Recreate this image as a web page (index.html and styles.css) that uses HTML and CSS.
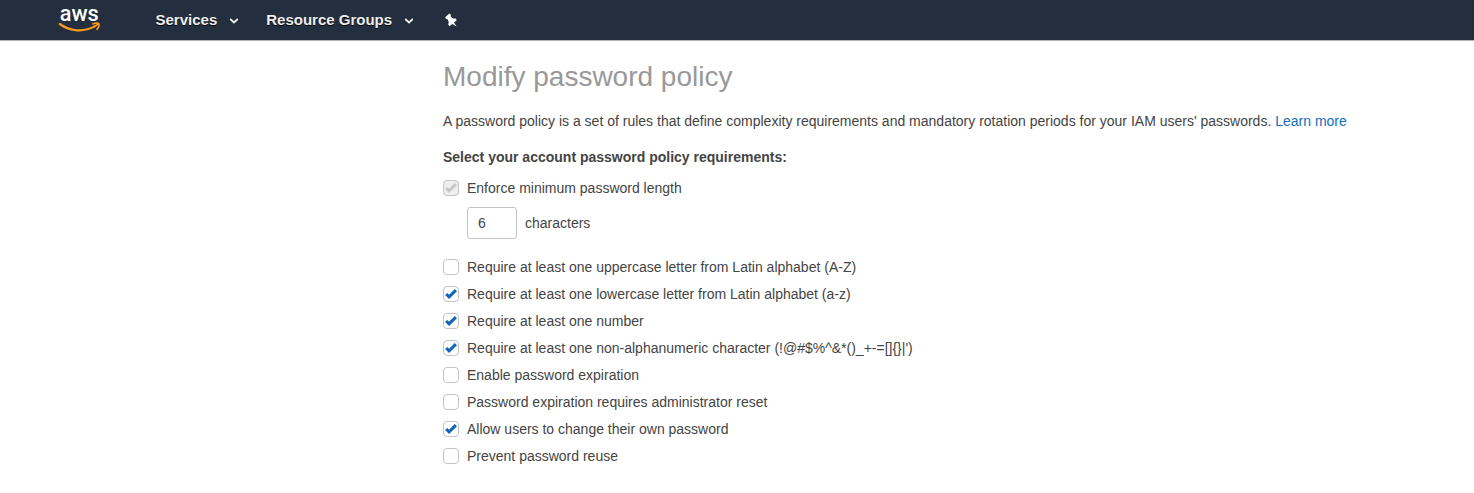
FILE: index.html
```html
<!DOCTYPE html>
<html lang="en">
<head>
<meta charset="utf-8">
<title>Modify password policy</title>
<link rel="stylesheet" href="styles.css">
</head>
<body>
<svg class="defs" width="0" height="0" aria-hidden="true">
  <symbol id="check" viewBox="0 0 14 14"><path d="M2.2 7L5.1 9.9L11.9 3.2" fill="none" stroke="currentColor" stroke-width="3.1"/></symbol>
  <symbol id="chevron" viewBox="0 0 10 6"><path d="M1.2 1L5 4.5L8.8 1" fill="none" stroke="currentColor" stroke-width="1.7"/></symbol>
</svg>
<header class="topbar">
  <a class="logo" aria-label="AWS">
    <svg class="logo-mark" width="44" height="28" viewBox="0 0 44 28">
      <text class="logo-text" x="1.8" y="15.5" textLength="39" lengthAdjust="spacingAndGlyphs">aws</text>
      <path d="M1.8 19C12 26.6 26 27.4 36.6 21.4" fill="none" stroke="#f79a1c" stroke-width="2.2" stroke-linecap="round"/>
      <path d="M34.2 19.3C36.5 17.8 40 17.8 40.8 18.7C41.3 20 40.3 23 38.6 24.8" fill="none" stroke="#f79a1c" stroke-width="1.7"/>
      <path d="M36 21.7L40.6 18.8" fill="none" stroke="#f79a1c" stroke-width="1.6"/>
    </svg>
  </a>
  <nav class="nav">
    <a class="nav-item">Services <svg class="chevron"><use href="#chevron"/></svg></a>
    <a class="nav-item groups">Resource Groups <svg class="chevron"><use href="#chevron"/></svg></a>
    <a class="pin" aria-label="Pin"><svg width="14" height="14" viewBox="0 0 14 14"><path d="M1.2 4.2L5.5 .6L6.9 1.8L6.6 3.2L8.8 5.5L11.6 5.5L12.8 7.2L10 9.6L12.6 13.6L8.3 10.9L5.4 13.2L4.3 11.6L4.7 8.8L3.4 6L2 5.9Z" fill="#fff"/></svg></a>
  </nav>
</header>
<main class="content">
  <h1 class="title">Modify password policy</h1>
  <p class="intro">A password policy is a set of rules that define complexity requirements and mandatory rotation periods for your IAM users' passwords. <a class="link">Learn more</a></p>
  <h2 class="subtitle">Select your account password policy requirements:</h2>
  <div class="option"><span class="box disabled"><svg><use href="#check"/></svg></span>Enforce minimum password length</div>
  <div class="length"><input class="length-input" type="text" value="6"><span>characters</span></div>
  <div class="option"><span class="box"></span>Require at least one uppercase letter from Latin alphabet (A-Z)</div>
  <div class="option"><span class="box"><svg><use href="#check"/></svg></span>Require at least one lowercase letter from Latin alphabet (a-z)</div>
  <div class="option"><span class="box"><svg><use href="#check"/></svg></span>Require at least one number</div>
  <div class="option"><span class="box"><svg><use href="#check"/></svg></span>Require at least one non-alphanumeric character (!@#$%^&amp;*()_+-=[]{}|')</div>
  <div class="option"><span class="box"></span>Enable password expiration</div>
  <div class="option"><span class="box"></span>Password expiration requires administrator reset</div>
  <div class="option"><span class="box"><svg><use href="#check"/></svg></span>Allow users to change their own password</div>
  <div class="option"><span class="box"></span>Prevent password reuse</div>
</main>
</body>
</html>
```
FILE: styles.css
```css
* { box-sizing: border-box; }
body {
  margin: 0;
  background: #fff;
  color: #444;
  font: 14px/20px "Liberation Sans", Arial, sans-serif;
  overflow: hidden;
}
.defs { display: block; height: 0; }
.topbar {
  display: flex;
  align-items: center;
  height: 41px;
  padding-left: 58px;
  background: #232f3e;
  border-bottom: 1px solid #b4b4b4;
}
.logo { display: flex; align-self: flex-start; width: 97.5px; padding-top: 5px; }
.logo-mark { overflow: visible; }
.logo-text { font: 500 22px Roboto, sans-serif; fill: #fff; }
.nav { display: flex; align-items: center; height: 40px; }
.nav-item {
  display: flex;
  align-items: center;
  color: #eee;
  font-size: 15px;
  font-weight: bold;
  text-shadow: 0 1px 0 #000;
}
.groups { margin-left: 27.5px; }
.chevron { width: 10px; height: 6px; margin: 2px 0 0 11.5px; }
.pin { display: flex; margin-left: 30px; }
.content { padding: 19px 0 0 443px; }
.title { margin: 0; color: #999; font-size: 28px; font-weight: normal; line-height: 34px; }
.intro { margin: 17px 0 0; white-space: nowrap; }
.link { color: #146ebe; }
.subtitle { margin: 16px 0 7px; font-size: 14px; line-height: 20px; }
.option { display: flex; align-items: center; height: 27px; }
.box {
  display: flex;
  width: 16px;
  height: 16px;
  margin-right: 8px;
  border: 1px solid #c4c4c4;
  border-radius: 4px;
  color: #1166bb;
}
.box svg { width: 14px; height: 14px; }
.disabled { background: #eee; color: #c8c8c8; }
.length { display: flex; align-items: center; gap: 8px; margin: 6px 0 14px 24px; }
.length-input {
  width: 50px;
  height: 32px;
  padding: 0 10px;
  border: 1px solid #c4c4c4;
  border-radius: 3px;
  color: #444;
  font: inherit;
}
```
